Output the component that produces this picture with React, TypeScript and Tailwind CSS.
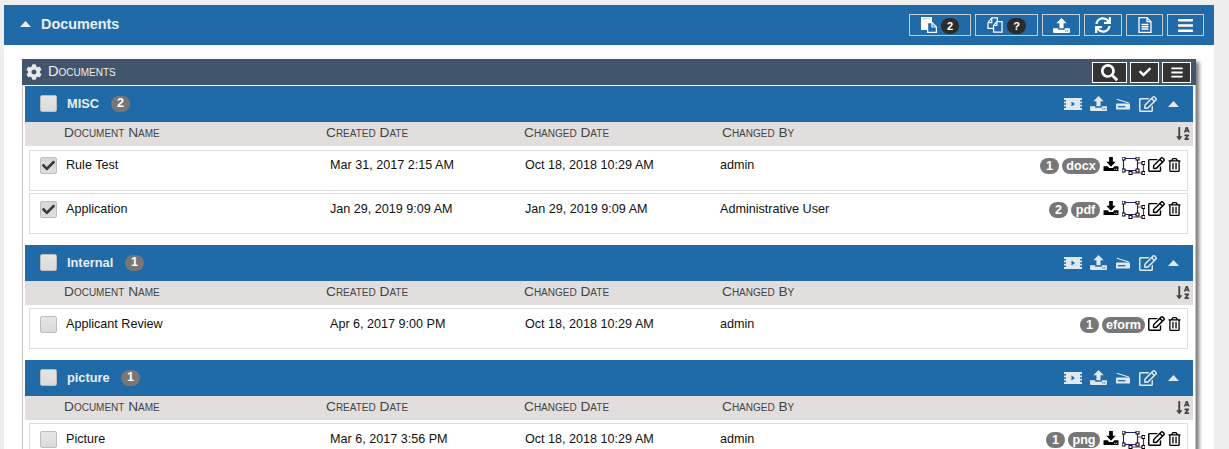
import React from "react";
import { FaCog, FaSearch, FaCheck, FaBars, FaSync, FaSortAlphaDown, FaRegEdit, FaRegTrashAlt } from "react-icons/fa";

const Upload = ({ className = "" }: { className?: string }) => (
  <svg viewBox="0 0 18 16" className={className} fill="currentColor">
    <path d="M9 0 L14.5 5.5 H11.2 V11 H6.8 V5.5 H3.5 Z" />
    <path d="M0 11 H5.5 V12.5 H12.5 V11 H18 V15 Q18 16 17 16 H1 Q0 16 0 15 Z" />
    <rect x="13" y="13.2" width="1.2" height="1.2" fill="#216aa8" />
    <rect x="15" y="13.2" width="1.2" height="1.2" fill="#216aa8" />
  </svg>
);

const Download = ({ className = "" }: { className?: string }) => (
  <svg viewBox="0 0 16 15" className={className} fill="currentColor">
    <path d="M6 0 H10 V5 H13 L8 10.5 L3 5 H6 Z" />
    <path d="M0 10 H4.5 L6 11.8 H10 L11.5 10 H16 V15 H0 Z" />
    <rect x="11.5" y="12.6" width="1.1" height="1.1" fill="#fff" />
    <rect x="13.5" y="12.6" width="1.1" height="1.1" fill="#fff" />
  </svg>
);

const Film = ({ className = "" }: { className?: string }) => (
  <svg viewBox="0 0 18 12" className={className} fill="currentColor">
    <path d="M0 0 H18 V2 H16 V3.5 H18 V5.2 H16 V6.8 H18 V8.5 H16 V10 H18 V12 H0 V10 H2 V8.5 H0 V6.8 H2 V5.2 H0 V3.5 H2 V2 H0 Z" />
    <path d="M7.5 3.5 L11 6 L7.5 8.5 Z" fill="#216aa8" />
  </svg>
);

const Scanner = ({ className = "" }: { className?: string }) => (
  <svg viewBox="0 0 15 12" className={className} fill="currentColor">
    <path d="M1 0.3 L14 4.3 L13.6 5.4 L0.6 1.4 Z" />
    <path d="M1 5.5 H14 Q15 5.5 15 6.5 V11 Q15 12 14 12 H1 Q0 12 0 11 V6.5 Q0 5.5 1 5.5 Z" />
    <rect x="2" y="8.2" width="8" height="1.4" fill="#216aa8" />
  </svg>
);

const FilesOutline = ({ className = "" }: { className?: string }) => (
  <svg viewBox="0 0 17 17" className={className} fill="none" stroke="currentColor" strokeWidth="1.3">
    <path d="M1 6 L5 1 H11 V5 M7 12 H1 V6" />
    <path d="M5 1 V6 H1" />
    <path d="M10.5 5 H16 V16 H7 V9 Z" />
    <path d="M10.5 5 V9 H7" />
  </svg>
);

const FilesSolid = ({ className = "" }: { className?: string }) => (
  <svg viewBox="0 0 16 16" className={className}>
    <path d="M0 0 H11 V5 H6 V13 H0 Z" fill="currentColor" />
    <rect x="1.5" y="1" width="8" height="1.2" fill="#c9d6e4" />
    <path d="M6.6 5.6 H11 L15.4 10 V15.4 H6.6 Z" fill="#216aa8" stroke="currentColor" strokeWidth="1.2" />
    <path d="M11 5.6 V10 H15.4" fill="none" stroke="currentColor" strokeWidth="1.2" />
  </svg>
);

const FileText = ({ className = "" }: { className?: string }) => (
  <svg viewBox="0 0 14 16" className={className} fill="none" stroke="currentColor" strokeWidth="1.3">
    <path d="M1 .7 H9 L13 4.7 V15.3 H1 Z" />
    <path d="M9 .7 V4.7 H13" />
    <path d="M3.5 7.5 H10.5 M3.5 9.7 H10.5 M3.5 12 H10.5" strokeWidth="1.5" />
  </svg>
);

const Caret = ({ className = "" }: { className?: string }) => (
  <svg viewBox="0 0 11 6" className={className} fill="currentColor">
    <path d="M5.5 0 L11 6 H0 Z" />
  </svg>
);

const ObjectGroup = ({ className = "" }: { className?: string }) => (
  <svg viewBox="0 0 23 18" className={className} fill="#fff">
    <path d="M1.5 1.5 H15.5 V13.5 H1.5 Z" stroke="#22226e" strokeWidth="1.2" fill="none" />
    <path d="M15.5 6 H21.5 V16 H8.5 V13.5" stroke="#86186a" strokeWidth="1.2" fill="none" />
    {[[1.5, 1.5], [15.5, 1.5], [1.5, 13.5], [15.5, 13.5], [21.5, 6], [21.5, 16], [8.5, 16]].map(([x, y]) => (
      <rect key={`${x}-${y}`} x={x - 1.5} y={y - 1.5} width="3" height="3" stroke="#000" strokeWidth="1" />
    ))}
  </svg>
);

const Badge = ({ children, className = "" }: { children: React.ReactNode; className?: string }) => (
  <span className={`inline-flex h-[16px] items-center justify-center rounded-full bg-[#777777] text-[12.6px] font-bold leading-none text-white ${className}`}>
    {children}
  </span>
);

const Check = ({ checked = false }: { checked?: boolean }) => (
  <span className={`flex h-[17px] w-[17px] shrink-0 items-center justify-center rounded-[2px] border border-[#bdbdbd] bg-gradient-to-b text-[#3a3a3a] ${checked ? "from-[#d6d6d6] to-[#dedede]" : "from-[#e6e6e6] to-[#dadada]"}`}>
    {checked && <FaCheck className="h-[13px] w-[13px]" />}
  </span>
);

const TopBtn = ({ w, children }: { w: string; children: React.ReactNode }) => (
  <span className={`flex h-[22px] items-center justify-center gap-[4px] border border-[#c9ccd0] text-white ${w}`}>{children}</span>
);

const DarkBtn = ({ w, children }: { w: string; children: React.ReactNode }) => (
  <span className={`flex h-[21px] items-center justify-center border border-white bg-[#333333] text-white ${w}`}>{children}</span>
);

const cols = "grid grid-cols-[262px_198px_198px_1fr]";

type Row = { name: string; created: string; changed: string; by: string; checked?: boolean; count: string; ext: string; extW: string; download: boolean; pad: string };

const Group = ({ title, count, titleW, rows, gap, listPad }: { title: string; count: string; titleW: string; rows: Row[]; gap: string; listPad: string }) => (
  <section className={gap}>
    <div className="flex h-[36px] items-center bg-[#216aa8] pb-[1px] pl-[15px] pr-[14px]">
      <Check />
      <span className={`ml-[10px] text-[12.8px] font-bold text-[#e8eef5] ${titleW}`}>{title}</span>
      <Badge className="w-[19px]">{count}</Badge>
      <div className="ml-auto flex items-center text-[#dfe7ef]">
        <Film className="h-[12px] w-[18px]" />
        <Upload className="ml-[8px] h-[15px] w-[17px]" />
        <Scanner className="ml-[9px] h-[12px] w-[14px]" />
        <FaRegEdit className="ml-[9px] h-[16px] w-[18px]" />
        <Caret className="ml-[11px] h-[6px] w-[11px]" />
      </div>
    </div>
    <div className={`${cols} relative h-[24px] items-center bg-[#e2dedd] pb-[1px] pl-[39px] text-[13.7px] text-[#444444] [font-variant:small-caps]`}>
      <span>Document Name</span>
      <span>Created Date</span>
      <span>Changed Date</span>
      <span>Changed By</span>
      <FaSortAlphaDown className="absolute right-[3px] top-[4px] h-[15px] w-[14px] text-[#444444]" />
    </div>
    <div className={`flex flex-col gap-[2px] pl-[4px] pr-[5px] ${listPad}`}>
      {rows.map((r) => (
        <div key={r.name} className={`flex h-[41px] items-start border border-[#dddddd] bg-white pl-[10px] pr-[6px] text-[12.6px] leading-[16px] text-[#111111] ${r.pad}`}>
          <Check checked={r.checked} />
          <span className="ml-[9px] w-[264px]">{r.name}</span>
          <span className="w-[195px]">{r.created}</span>
          <span className="w-[195px]">{r.changed}</span>
          <span>{r.by}</span>
          <div className="ml-auto flex items-start">
            <Badge className="mt-[1px] w-[19px]">{r.count}</Badge>
            <Badge className={`ml-[3px] mt-[1px] ${r.extW}`}>{r.ext}</Badge>
            {r.download && <Download className="ml-[3px] h-[14px] w-[16px] text-black" />}
            {r.download && <ObjectGroup className="ml-[3px] h-[18px] w-[23px]" />}
            <FaRegEdit className="ml-[3px] h-[15px] w-[17px] text-black" />
            <FaRegTrashAlt className="ml-[3px] mt-[1px] h-[14px] w-[13px] text-black" />
          </div>
        </div>
      ))}
    </div>
  </section>
);

export default function App() {
  return (
    <div className="h-[449px] overflow-hidden bg-[#eeeeee] pl-[4px] pt-[5px] font-['Liberation_Sans',Arial,sans-serif]">
      <div className="h-[444px] w-[1210px] bg-white">
        <header className="flex h-[40px] items-center bg-[#216aa8] pl-[16px] pr-[10px]">
          <Caret className="mb-[2px] h-[6px] w-[11px] text-[#e8eef5]" />
          <span className="ml-[10px] mb-[1px] text-[14.4px] font-bold text-[#e8eef5]">Documents</span>
          <div className="ml-auto flex gap-[4px]">
            <TopBtn w="w-[62px]">
              <FilesSolid className="h-[16px] w-[16px]" />
              <span className="mt-[2px] flex h-[16px] w-[18px] items-center justify-center rounded-full bg-[#2b2b2b] text-[11px] font-bold">2</span>
            </TopBtn>
            <TopBtn w="w-[63px]">
              <FilesOutline className="h-[16px] w-[16px]" />
              <span className="mt-[2px] flex h-[16px] w-[19px] items-center justify-center rounded-full bg-[#2b2b2b] text-[11px] font-bold">?</span>
            </TopBtn>
            <TopBtn w="w-[38px]"><Upload className="h-[15px] w-[17px]" /></TopBtn>
            <TopBtn w="w-[38px]"><FaSync className="h-[16px] w-[16px]" /></TopBtn>
            <TopBtn w="w-[37px]"><FileText className="h-[16px] w-[14px]" /></TopBtn>
            <TopBtn w="w-[37px]"><FaBars className="h-[17px] w-[15px]" /></TopBtn>
          </div>
        </header>
        <div className="ml-[18px] mt-[14px] w-[1174px] shadow-[3px_3px_4px_rgba(0,0,0,0.55)]">
          <div className="flex h-[26px] items-center bg-[#41566c] pl-[4px] pr-[5px]">
            <FaCog className="h-[16px] w-[16px] text-[#e8e8e8]" />
            <span className="mb-[1px] ml-[6px] text-[14.6px] text-[#eeeeee] [font-variant:small-caps]">Documents</span>
            <div className="ml-auto flex gap-[3px]">
              <DarkBtn w="w-[35px]"><FaSearch className="h-[17px] w-[17px]" /></DarkBtn>
              <DarkBtn w="w-[29px]"><FaCheck className="h-[12px] w-[12px]" /></DarkBtn>
              <DarkBtn w="w-[29px]"><FaBars className="h-[13px] w-[12px]" /></DarkBtn>
            </div>
          </div>
          <div className="border-x border-x-[#c8c8c8] bg-white pl-[2px] pr-[2px] pt-[1px] pb-[40px]">
            <Group
              title="MISC"
              count="2"
              titleW="w-[44px]"
              gap=""
              listPad="pt-[4px]"
              rows={[
                { name: "Rule Test", created: "Mar 31, 2017 2:15 AM", changed: "Oct 18, 2018 10:29 AM", by: "admin", checked: true, count: "1", ext: "docx", extW: "w-[38px]", download: true, pad: "pt-[6px]" },
                { name: "Application", created: "Jan 29, 2019 9:09 AM", changed: "Jan 29, 2019 9:09 AM", by: "Administrative User", checked: true, count: "2", ext: "pdf", extW: "w-[29px]", download: true, pad: "pt-[7px]" },
              ]}
            />
            <Group
              title="Internal"
              count="1"
              titleW="w-[58px]"
              gap="mt-[11px]"
              listPad="pt-[3px]"
              rows={[
                { name: "Applicant Review", created: "Apr 6, 2017 9:00 PM", changed: "Oct 18, 2018 10:29 AM", by: "admin", count: "1", ext: "eform", extW: "w-[43px]", download: false, pad: "pt-[7px]" },
              ]}
            />
            <Group
              title="picture"
              count="1"
              titleW="w-[54px]"
              gap="mt-[11px]"
              listPad="pt-[3px]"
              rows={[
                { name: "Picture", created: "Mar 6, 2017 3:56 PM", changed: "Oct 18, 2018 10:29 AM", by: "admin", count: "1", ext: "png", extW: "w-[32px]", download: true, pad: "pt-[7px]" },
              ]}
            />
          </div>
        </div>
      </div>
    </div>
  );
}
